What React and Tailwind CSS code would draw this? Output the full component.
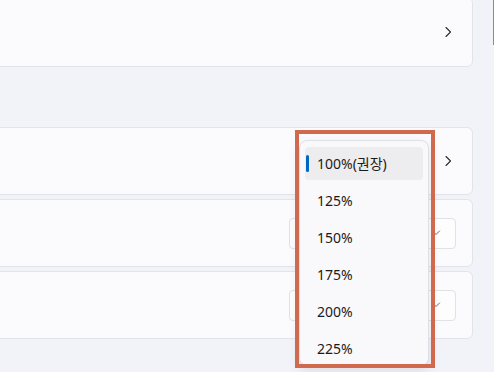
import React from "react";

const ChevronRight = () => (
  <svg width="12" height="12" viewBox="0 0 12 12" fill="none">
    <path d="M4 1.5 L8.5 6 L4 10.5" stroke="#2b2b2b" strokeWidth="1.1" strokeLinecap="round" strokeLinejoin="round" />
  </svg>
);

const ChevronDown = () => (
  <svg width="10" height="6" viewBox="0 0 10 6" fill="none">
    <path d="M1.5 1 L5 4.5 L8.5 1" stroke="#6b6b6b" strokeWidth="1" strokeLinecap="round" strokeLinejoin="round" />
  </svg>
);

const items = ["100%(권장)", "125%", "150%", "175%", "200%", "225%"];

export default function App() {
  return (
    <div
      className="relative w-[494px] h-[372px] overflow-hidden bg-[#f1f3f8]"
      style={{ fontFamily: '"Noto Sans", "Noto Sans CJK KR", sans-serif' }}
    >
      <div className="flex flex-col ml-[-12px] w-[485px]">
        <div className="mt-[-3px] h-[70px] rounded-[6px] border border-[#e3e4e9] bg-[#fbfbfd] flex items-center justify-end pr-[18px]">
          <ChevronRight />
        </div>
        <div className="h-[60px]" />
        <div className="flex flex-col gap-[4px]">
          <div className="h-[68px] rounded-[6px] border border-[#e3e4e9] bg-[#fbfbfd] flex items-center justify-end pr-[18px]">
            <ChevronRight />
          </div>
          <div className="h-[68px] rounded-[6px] border border-[#e3e4e9] bg-[#fbfbfd] flex items-center justify-end pr-[16px]">
            <div className="w-[167px] h-[31px] rounded-[4px] border border-[#e1e2e6] bg-[#fdfdfd] flex items-center justify-end pr-[14px]">
              <ChevronDown />
            </div>
          </div>
          <div className="h-[68px] rounded-[6px] border border-[#e3e4e9] bg-[#fbfbfd] flex items-center justify-end pr-[16px]">
            <div className="w-[167px] h-[31px] rounded-[4px] border border-[#e1e2e6] bg-[#fdfdfd] flex items-center justify-end pr-[14px]">
              <ChevronDown />
            </div>
          </div>
        </div>
      </div>

      {/* scrollbar */}
      <div className="absolute right-0 top-0 w-[1px] h-[45px] bg-[#8c8c8c]" />

      {/* flyout menu */}
      <div className="absolute left-[299px] top-[140px] w-[130px] h-[226px] rounded-[8px] border border-[#dfe0e4] bg-[#f9f9fb] shadow-[0_4px_12px_rgba(0,0,0,0.10)] px-[5px] pt-[6px] flex flex-col gap-[4px]">
        {items.map((t, i) => (
          <div
            key={t}
            className={
              "relative h-[33px] shrink-0 rounded-[4px] flex items-center pl-[12px] text-[14px] text-[#1b1b1b] " +
              (i === 0 ? "bg-[#ededf0]" : "")
            }
          >
            {i === 0 && (
              <div className="absolute left-[1px] top-[8px] w-[3px] h-[17px] rounded-full bg-[#0067c0]" />
            )}
            {t}
          </div>
        ))}
      </div>

      {/* highlight box */}
      <div className="absolute left-[295px] top-[130px] w-[140px] h-[238px] border-[4px] border-[#d0694e]" />
    </div>
  );
}
